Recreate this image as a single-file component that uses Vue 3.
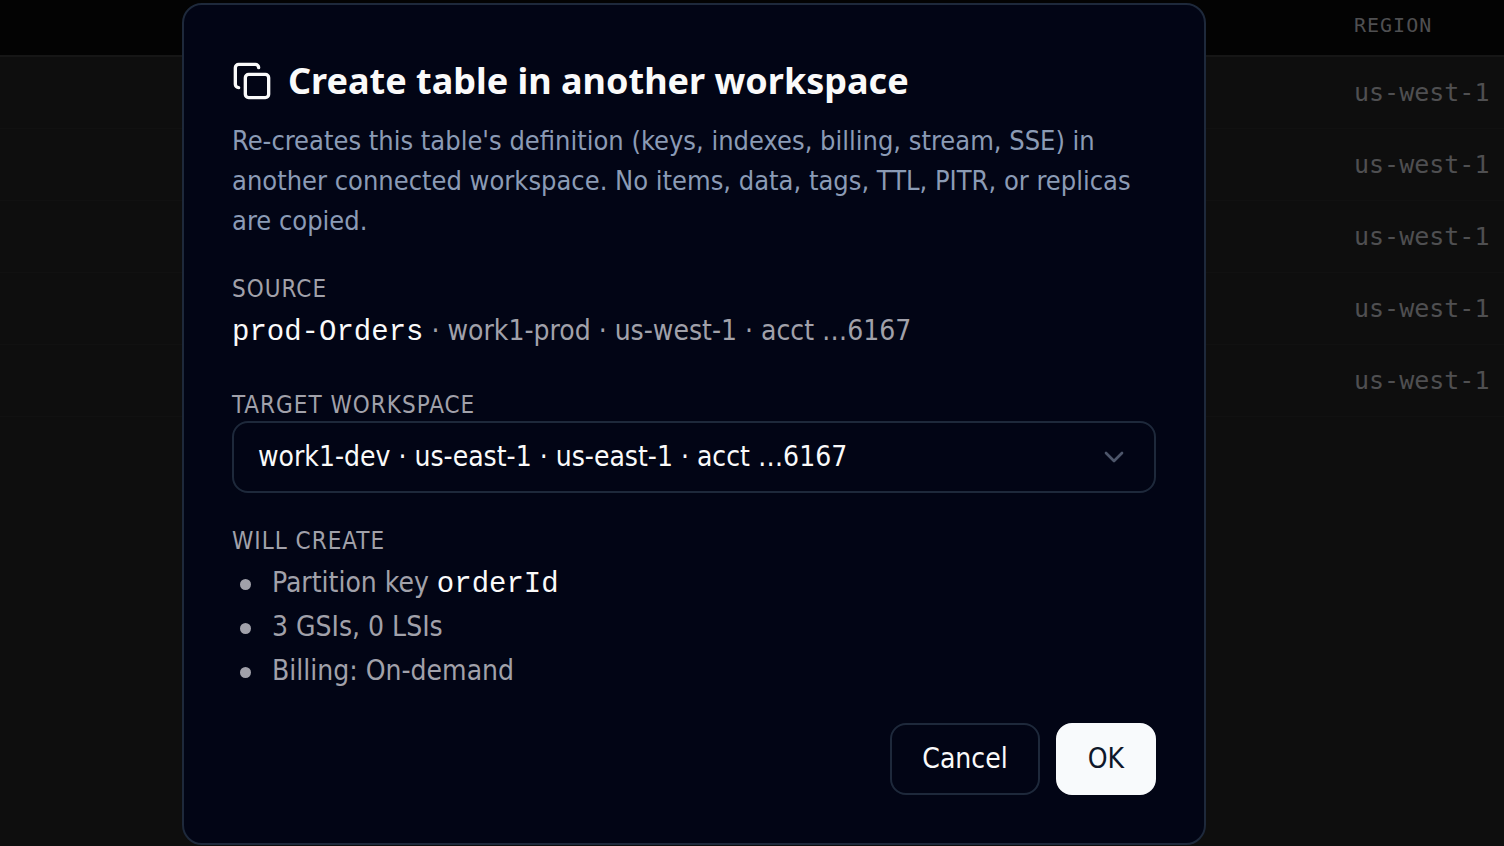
<script setup>
import { ref } from 'vue'

const rows = ['us-west-1', 'us-west-1', 'us-west-1', 'us-west-1', 'us-west-1']
const targets = ['work1-dev · us-east-1 · us-east-1 · acct …6167']
const target = ref(targets[0])
</script>

<template>
  <div class="page">
    <table class="regions">
      <thead>
        <tr><th class="blank"></th><th class="region" scope="col">REGION</th></tr>
      </thead>
      <tbody>
        <tr v-for="(row, i) in rows" :key="i">
          <td class="blank"></td>
          <td class="region">{{ row }}</td>
        </tr>
      </tbody>
    </table>

    <div class="overlay">
      <section class="dialog" role="dialog" aria-modal="true" aria-labelledby="dialog-title">
        <header class="heading">
          <svg class="copy" viewBox="0 0 24 24" aria-hidden="true">
            <rect x="8" y="8" width="14" height="14" rx="2" />
            <path d="M4 16c-1.1 0-2-.9-2-2V4c0-1.1.9-2 2-2h10c1.1 0 2 .9 2 2" />
          </svg>
          <h2 id="dialog-title">Create table in another workspace</h2>
        </header>
        <p class="intro">Re-creates this table's definition (keys, indexes, billing, stream, SSE) in another connected workspace. No items, data, tags, TTL, PITR, or replicas are copied.</p>

        <div class="group source">
          <h3 class="label">SOURCE</h3>
          <p class="value"><code>prod-Orders</code> · work1-prod · us-west-1 · acct …6167</p>
        </div>

        <div class="group">
          <label class="label" for="target">TARGET WORKSPACE</label>
          <div class="picker">
            <select id="target" v-model="target">
              <option v-for="t in targets" :key="t" :value="t">{{ t }}</option>
            </select>
            <svg class="chevron" viewBox="0 0 24 24" aria-hidden="true"><path d="m6 9 6 6 6-6" /></svg>
          </div>
        </div>

        <div class="group">
          <h3 class="label">WILL CREATE</h3>
          <ul class="plan">
            <li><span>Partition key <code>orderId</code></span></li>
            <li>3 GSIs, 0 LSIs</li>
            <li>Billing: On-demand</li>
          </ul>
        </div>

        <footer class="actions">
          <button type="button" class="cancel">Cancel</button>
          <button type="button" class="ok">OK</button>
        </footer>
      </section>
    </div>
  </div>
</template>

<style>
body {
  background: #0e0e0e;
}
</style>

<style scoped>
* {
  box-sizing: border-box;
  margin: 0;
}
.page {
  position: relative;
  min-height: 100vh;
  overflow: hidden;
  background: #0e0e0e;
  font-family: "DejaVu Sans Condensed", "DejaVu Sans", sans-serif;
  font-size: 28px;
  line-height: 40px;
}
.regions {
  width: 100%;
  border-collapse: separate;
  border-spacing: 0;
  table-layout: fixed;
  font-family: "DejaVu Sans Mono", monospace;
  font-size: 25px;
  color: #4f4f51;
}
.regions th {
  height: 57px;
  padding: 0 0 6px;
  border-bottom: 2px solid #161616;
  background: #030303;
  font-size: 20px;
  font-weight: 400;
  letter-spacing: 1px;
  text-align: left;
}
.regions td {
  height: 72px;
  padding: 0;
  border-bottom: 1px solid #111111;
}
.regions .region {
  width: 150px;
}
.overlay {
  position: absolute;
  inset: 0;
  display: flex;
  justify-content: center;
  align-items: flex-start;
  padding: 3px 116px 0 0;
}
.dialog {
  width: 100%;
  max-width: 1024px;
  padding: 48px;
  border: 2px solid #1e293b;
  border-radius: 20px;
  background: #020515;
  color: #a1a1aa;
}
.heading {
  display: flex;
  align-items: center;
  gap: 16px;
  height: 56px;
  color: #fafafa;
}
.heading h2 {
  font-family: "Noto Sans", sans-serif;
  font-size: 36px;
  font-weight: 700;
}
.copy {
  flex: none;
  width: 40px;
  height: 40px;
  fill: none;
  stroke: #fafafa;
  stroke-width: 2;
  stroke-linecap: round;
  stroke-linejoin: round;
}
.intro {
  margin-top: 12px;
  font-size: 27px;
  color: #8b9bb5;
}
.group {
  margin-top: 32px;
}
.source {
  padding-bottom: 6px;
}
.label {
  display: block;
  font-size: 24px;
  font-weight: 400;
  line-height: 32px;
  letter-spacing: 1px;
}
.value,
.plan {
  margin-top: 6px;
}
code {
  font-family: "Liberation Mono", monospace;
  font-size: 29px;
  line-height: 1;
  color: #fafafa;
}
.picker {
  position: relative;
}
.picker select {
  display: block;
  width: 100%;
  height: 72px;
  padding: 0 72px 0 24px;
  border: 2px solid #1e293b;
  border-radius: 16px;
  appearance: none;
  background: transparent;
  color: #fafafa;
  font: inherit;
}
.chevron {
  position: absolute;
  top: 20px;
  right: 26px;
  width: 32px;
  height: 32px;
  fill: none;
  stroke: #4d566a;
  stroke-width: 2;
  stroke-linecap: round;
  stroke-linejoin: round;
  pointer-events: none;
}
.plan {
  display: flex;
  flex-direction: column;
  gap: 4px;
  padding: 0;
  list-style: none;
}
.plan li {
  display: flex;
  align-items: center;
}
.plan li::before {
  content: "";
  flex: none;
  width: 11px;
  height: 11px;
  margin: 2px 21px 0 8px;
  border-radius: 50%;
  background: #a1a1aa;
}
.actions {
  display: flex;
  justify-content: flex-end;
  gap: 16px;
  margin-top: 32px;
}
.actions button {
  height: 72px;
  padding: 0 30px;
  border: 2px solid #1e293b;
  border-radius: 16px;
  background: transparent;
  color: #fafafa;
  font: inherit;
}
.actions .ok {
  border-color: #f8fafc;
  background: #f8fafc;
  color: #0f172a;
}
</style>
